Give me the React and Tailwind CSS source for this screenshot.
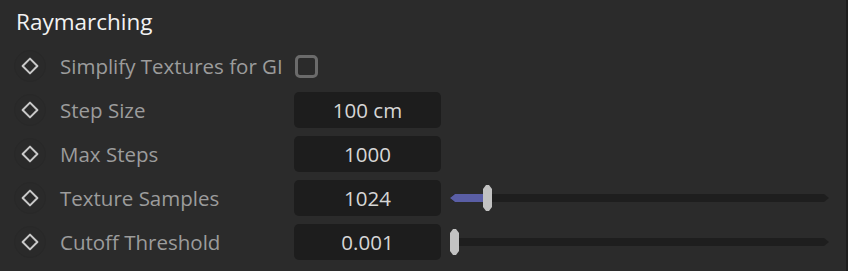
import React from "react";

const font = { fontFamily: '"Segoe UI", "Open Sans", "Noto Sans", sans-serif' };

function Diamond() {
  return (
    <div className="w-8 h-8 rounded-full bg-[#2a2a2a] border border-[#282828] flex items-center justify-center ml-[14px] shrink-0">
      <svg width="20" height="20" viewBox="0 0 20 20">
        <path d="M10 2.6 L17.4 10 L10 17.4 L2.6 10 Z" fill="none" stroke="#c9c9c9" strokeWidth="2" strokeLinejoin="round" />
      </svg>
    </div>
  );
}

function Slider({ pos, fill }) {
  return (
    <div className="relative ml-[9px] w-[379px] h-[26px] flex items-center">
      <div className="w-full h-2 bg-[#1e1e1e] [clip-path:polygon(4px_0,calc(100%-5px)_0,100%_50%,calc(100%-5px)_100%,4px_100%,0_50%)]" />
      {fill > 0 && (
        <div
          className="absolute left-0 top-[9px] h-2 bg-[#5a5ea5] [clip-path:polygon(5px_0,100%_0,100%_100%,5px_100%,0_50%)]"
          style={{ width: fill }}
        />
      )}
      <div
        className="absolute top-0 w-[9px] h-[26px] bg-[#c2c2c2] [clip-path:polygon(0_4px,3px_0,6px_0,100%_4px,100%_calc(100%-4px),6px_100%,3px_100%,0_calc(100%-4px))]"
        style={{ left: pos }}
      />
    </div>
  );
}

function Row({ label, children }) {
  return (
    <div className="h-11 flex items-center">
      <Diamond />
      <div className="ml-[14px] w-[234px] text-[20.5px] text-[#9c9c9c] leading-none whitespace-nowrap flex items-center">
        {label}
      </div>
      {children}
    </div>
  );
}

function Field({ value }) {
  return (
    <div className="w-[147px] h-9 rounded-[5px] bg-[#1d1d1d] flex items-center justify-center text-[20.5px] text-[#d6d6d6] leading-none">
      {value}
    </div>
  );
}

export default function App() {
  return (
    <div className="w-[848px] h-[271px] bg-[#2b2b2b] border-r-2 border-[#1e1e1e] overflow-hidden" style={font}>
      <div className="h-11 flex items-center pl-4 text-[22.5px] text-[#f2f2f2] leading-none">Raymarching</div>
      <div className="h-11 flex items-center">
        <Diamond />
        <div className="ml-[14px] text-[20.5px] text-[#9c9c9c] leading-none whitespace-nowrap">Simplify Textures for GI</div>
        <div className="ml-3 w-[23px] h-[23px] rounded-[5px] border-[3px] border-[#6b6b6b]" />
      </div>
      <Row label="Step Size"><Field value="100 cm" /></Row>
      <Row label="Max Steps"><Field value="1000" /></Row>
      <Row label="Texture Samples">
        <Field value="1024" />
        <Slider pos={33} fill={36} />
      </Row>
      <Row label="Cutoff Threshold">
        <Field value="0.001" />
        <Slider pos={0} fill={0} />
      </Row>
    </div>
  );
}
